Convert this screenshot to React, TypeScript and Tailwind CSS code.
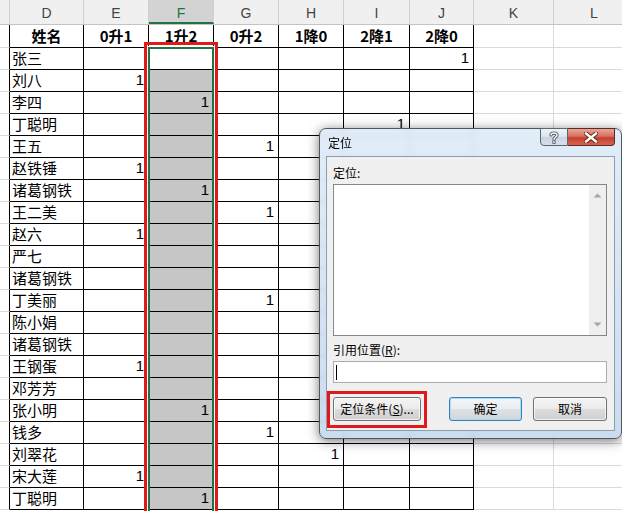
import * as React from "react";

const CN = '"Noto Sans CJK SC", sans-serif';
const NUM = '"Liberation Sans", "Noto Sans CJK SC", sans-serif';

type Col = "E" | "F" | "G" | "H" | "I" | "J";

const dataCols: { key: Col; title: string; w: string }[] = [
  { key: "E", title: "0升1", w: "w-[65px]" },
  { key: "F", title: "1升2", w: "w-[65px]" },
  { key: "G", title: "0升2", w: "w-[65px]" },
  { key: "H", title: "1降0", w: "w-[65px]" },
  { key: "I", title: "2降1", w: "w-[66px]" },
  { key: "J", title: "2降0", w: "w-[64px]" },
];

// name + the column that holds a "1"
const rows: [string, Col | ""][] = [
  ["张三", "J"],
  ["刘八", "E"],
  ["李四", "F"],
  ["丁聪明", "I"],
  ["王五", "G"],
  ["赵铁锤", "E"],
  ["诸葛钢铁", "F"],
  ["王二美", "G"],
  ["赵六", "E"],
  ["严七", ""],
  ["诸葛钢铁", ""],
  ["丁美丽", "G"],
  ["陈小娟", ""],
  ["诸葛钢铁", ""],
  ["王钢蛋", "E"],
  ["邓芳芳", ""],
  ["张小明", "F"],
  ["钱多", "G"],
  ["刘翠花", "H"],
  ["宋大莲", "E"],
  ["丁聪明", "F"],
];

const btn =
  "h-[24px] rounded-[3px] border border-[#707070] bg-[linear-gradient(to_bottom,#f4f4f4_0%,#ebebeb_48%,#dcdcdc_52%,#cfcfcf_100%)] shadow-[inset_0_0_0_1px_rgba(255,255,255,0.7)] flex items-center justify-center text-[12px] text-black";

function ColumnHeader() {
  return (
    <div className="flex h-[25px] border-b border-[#c4c4c4] bg-[#f0f0f0] text-[14px] text-[#444]" style={{ fontFamily: NUM }}>
      <div className="w-[10px] border-r border-[#d0d0d0]" />
      <div className="w-[74px] border-r border-[#d0d0d0] flex items-center justify-center pt-[3px]">D</div>
      {dataCols.map((c) =>
        c.key === "F" ? (
          <div key={c.key} className={`${c.w} border-r border-[#d0d0d0] bg-[#d3d3d3] border-b-2 border-b-[#217346] text-[#217346] flex items-center justify-center pt-[4px]`}>
            F
          </div>
        ) : (
          <div key={c.key} className={`${c.w} border-r border-[#d0d0d0] flex items-center justify-center pt-[3px]`}>
            {c.key}
          </div>
        )
      )}
      <div className="w-[80px] border-r border-[#d0d0d0] flex items-center justify-center pt-[3px]">K</div>
      <div className="w-[80px] flex items-center justify-center pt-[3px]">L</div>
    </div>
  );
}

function TitleRow() {
  return (
    <div className="flex h-[23px] text-[15px] font-bold text-black" style={{ fontFamily: CN }}>
      <div className="w-[10px] border-r border-b border-r-black border-b-[#dadada]" />
      <div className="w-[74px] border-r border-b border-black flex items-center justify-center">姓名</div>
      {dataCols.map((c) => (
        <div key={c.key} className={`${c.w} border-r border-b border-black flex items-center justify-center`}>
          {c.title}
        </div>
      ))}
      <div className="w-[80px] border-r border-b border-[#dadada]" />
      <div className="w-[80px] border-b border-[#dadada]" />
    </div>
  );
}

function DataRow({ name, one, first }: { name: string; one: Col | ""; first: boolean }) {
  return (
    <div className="flex h-[22px] text-black">
      <div className="w-[10px] border-r border-b border-r-black border-b-[#dadada]" />
      <div className="w-[74px] border-r border-b border-black flex items-center pl-[2px] text-[15px]" style={{ fontFamily: CN }}>
        {name}
      </div>
      {dataCols.map((c) => (
        <div
          key={c.key}
          className={`${c.w} border-r border-b border-black flex items-center justify-end pr-[4px] text-[15px] ${
            c.key === "F" && !first ? "bg-[#c6c6c6]" : "bg-white"
          }`}
          style={{ fontFamily: NUM }}
        >
          {one === c.key ? "1" : ""}
        </div>
      ))}
      <div className="w-[80px] border-r border-b border-[#dadada]" />
      <div className="w-[80px] border-b border-[#dadada]" />
    </div>
  );
}

function ScrollArrow({ up }: { up: boolean }) {
  return (
    <svg width="9" height="5" viewBox="0 0 9 5">
      <path d={up ? "M0.5 4.5 L4.5 0.5 L8.5 4.5 Z" : "M0.5 0.5 L4.5 4.5 L8.5 0.5 Z"} fill="#a6a6a6" />
    </svg>
  );
}

function GotoDialog() {
  return (
    <div
      className="absolute left-[319px] top-[128px] w-[303px] h-[311px] rounded-[7px] border border-[#50565e] bg-[linear-gradient(to_bottom,rgba(222,235,248,0.9),rgba(196,215,237,0.88))] backdrop-blur-[3px] shadow-[0_2px_12px_rgba(0,0,0,0.55)] flex flex-col"
      style={{ fontFamily: CN }}
    >
      {/* title bar */}
      <div className="flex h-[27px] items-start">
        <div className="flex-1 pl-[8px] pt-[6px] text-[12px] leading-[16px] text-black">定位</div>
        <div className="flex mr-[6px] -mt-px">
          <div className="w-[28px] h-[18px] rounded-bl-[4px] border border-[#5b6673] bg-[linear-gradient(to_bottom,#eef3f8_0%,#dbe3ec_50%,#c9d3de_51%,#d7e0ea_100%)] flex items-center justify-center">
            <svg width="10" height="13" viewBox="0 0 10 13">
              <path
                d="M2 4 C2 1.5 8 1.2 8 4.2 C8 6 5 6.2 5 8.5 M5 10.5 L5 11.8"
                fill="none"
                stroke="#4a525c"
                strokeWidth="3.2"
                strokeLinecap="round"
              />
              <path
                d="M2 4 C2 1.5 8 1.2 8 4.2 C8 6 5 6.2 5 8.5 M5 10.5 L5 11.8"
                fill="none"
                stroke="#ffffff"
                strokeWidth="1.4"
                strokeLinecap="round"
              />
            </svg>
          </div>
          <div className="w-[47px] h-[18px] rounded-br-[4px] border border-l-0 border-[#5a2a25] bg-[linear-gradient(to_bottom,#e8a597_0%,#d7705f_45%,#c6402d_55%,#d3654f_100%)] flex items-center justify-center">
            <svg width="14" height="11" viewBox="0 0 14 11">
              <path d="M2 1.5 L12 9.5 M12 1.5 L2 9.5" stroke="#5a1d16" strokeWidth="4.2" strokeLinecap="square" />
              <path d="M2 1.5 L12 9.5 M12 1.5 L2 9.5" stroke="#ffffff" strokeWidth="2.4" strokeLinecap="square" />
            </svg>
          </div>
        </div>
      </div>

      {/* client area */}
      <div className="mx-[6px] w-[289px] h-[275px] border border-[#8c9db0] bg-[#f0f0f0] pl-[6px] pr-[7px] pt-[8px] text-[12px] text-black">
        <div className="h-[16px] leading-[16px]">定位:</div>
        <div className="mt-[3px] h-[152px] border border-[#828790] bg-white flex justify-end">
          <div className="w-[17px] h-full bg-[#efefef] flex flex-col items-center justify-between py-[8px]">
            <ScrollArrow up />
            <ScrollArrow up={false} />
          </div>
        </div>
        <div className="mt-[6px] h-[16px] leading-[16px]">
          引用位置(<span className="underline">R</span>):
        </div>
        <div className="mt-[3px] h-[22px] border border-[#abadb3] bg-white flex items-center pl-[2px]">
          <div className="w-px h-[15px] bg-black" />
        </div>
        <div className="mt-[14px] flex">
          <div className="relative">
            <div className={`${btn} w-[88px]`}>
              定位条件(<span className="underline">S</span>)...
            </div>
            <div className="absolute left-[-6px] right-[-6px] top-[-6px] bottom-[-7px] border-[3px] border-[#e0191b]" />
          </div>
          <div className="ml-[28px] w-[73px] h-[24px] rounded-[3px] border border-[#3c7fb1] bg-[linear-gradient(to_bottom,#f4f6f8_0%,#eaedf0_48%,#dde1e5_52%,#d2d6da_100%)] shadow-[inset_0_0_0_1px_#a9dcf7] flex items-center justify-center text-[12px]">
            确定
          </div>
          <div className={`${btn} ml-[11px] w-[74px]`}>取消</div>
        </div>
      </div>
    </div>
  );
}

export default function App() {
  return (
    <div className="relative w-[622px] h-[511px] overflow-hidden bg-white">
      <div className="w-[700px]">
        <ColumnHeader />
        <TitleRow />
        {rows.map(([name, one], i) => (
          <DataRow key={i} name={name} one={one} first={i === 0} />
        ))}
      </div>

      {/* selection of F3:F23 */}
      <div className="absolute left-[148px] top-[47px] w-[66px] h-[480px] border-2 border-[#217346] shadow-[0_0_0_1px_#ffffff]" />
      {/* red highlight around column F */}
      <div className="absolute left-[144px] top-[42px] w-[74px] h-[490px] border-[3px] border-[#e0191b]" />

      <GotoDialog />
    </div>
  );
}
